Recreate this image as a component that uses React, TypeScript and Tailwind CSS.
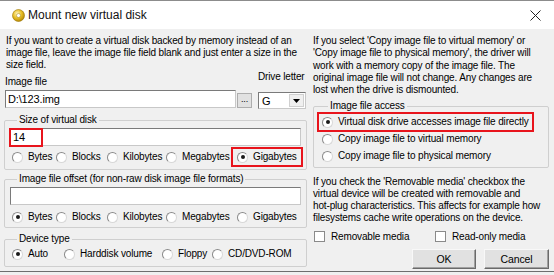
import React from "react";

const font = { fontFamily: '"Liberation Sans", Arial, sans-serif' };

function Radio({ label, checked, w, children }: { label: string; checked?: boolean; w?: string; children?: React.ReactNode }) {
  return (
    <div className={`relative flex items-center h-[12px] shrink-0 ${w ?? ""}`}>
      {children}
      <span className="relative flex items-center justify-center w-[11px] h-[11px] rounded-full border border-t-[#8a8a8a] border-l-[#8a8a8a] border-r-[#d8d8d8] border-b-[#d8d8d8] bg-white shrink-0">
        {checked && <span className="w-[4px] h-[4px] rounded-full bg-[#1a1a1a]" />}
      </span>
      <span className="ml-[5px] whitespace-nowrap">{label}</span>
    </div>
  );
}

function Check({ label, w }: { label: string; w?: string }) {
  return (
    <div className={`flex items-center h-[13px] shrink-0 ${w ?? ""}`}>
      <span className="w-[11px] h-[11px] border border-[#8a8a8a] bg-white shrink-0" />
      <span className="ml-[6px] whitespace-nowrap">{label}</span>
    </div>
  );
}

function TextBox({ value, children }: { value?: string; children?: React.ReactNode }) {
  return (
    <div className="relative h-[18px] bg-white border border-[#7a7a7a] border-r-[#c8c8c8] border-b-[#c8c8c8] flex items-center pl-[2px] text-[11px]">
      {value}
      {children}
    </div>
  );
}

export default function App() {
  return (
    <div className="w-[554px] h-[275px] bg-[#f0f0f0] text-[10px] tracking-[-0.15px] text-black leading-[12px] overflow-hidden" style={font}>
      <div className="h-[272px] flex flex-col border-t border-[#8c8c8c] border-b border-b-[#6e6e6e]">
        {/* title bar */}
        <div className="h-[28px] bg-white flex items-center shrink-0">
          <svg className="ml-[12px]" width="13" height="13" viewBox="0 0 13 13">
            <defs>
              <radialGradient id="cd" cx="0.4" cy="0.35" r="0.7">
                <stop offset="0" stopColor="#fff6c0" />
                <stop offset="0.5" stopColor="#e8c02a" />
                <stop offset="1" stopColor="#b08300" />
              </radialGradient>
            </defs>
            <circle cx="6.5" cy="6.5" r="6" fill="url(#cd)" stroke="#9a7400" strokeWidth="0.6" />
            <circle cx="6.5" cy="6.5" r="2" fill="#ffffff" stroke="#a08010" strokeWidth="0.5" />
          </svg>
          <span className="ml-[3px] text-[12px] tracking-normal leading-none text-[#111]">
            Mount new virtual disk
          </span>
          <svg className="ml-auto mr-[13px]" width="11" height="11" viewBox="0 0 11 11">
            <path d="M0.5 0.5 L10.5 10.5 M10.5 0.5 L0.5 10.5" stroke="#222" strokeWidth="1" />
          </svg>
        </div>

        <div className="flex flex-1 min-h-0">
          {/* left column */}
          <div className="w-[307px] pl-[4px] shrink-0 flex flex-col">
            <p className="pt-[6px] pl-[2px] leading-[12px] whitespace-nowrap">
              If you want to create a virtual disk backed by memory instead of an<br />
              image file, leave the image file field blank and just enter a size in the<br />
              size field.
            </p>
            <div className="flex">
              <div className="flex flex-col w-[248px] pl-[1px]">
                <span className="mt-[5px] h-[12px]">Image file</span>
                <div className="flex items-end mt-[2px]">
                  <div className="w-[233px]">
                    <TextBox value="D:\123.img" />
                  </div>
                  <div className="w-[15px] h-[15px] ml-[1px] bg-[#e1e1e1] border border-[#adadad] flex items-center justify-center text-[9px] leading-none pb-[3px]">...</div>
                </div>
              </div>
              <div className="flex flex-col ml-[6px] w-[48px]">
                <span className="h-[12px] whitespace-nowrap">Drive letter</span>
                <div className="mt-[9px] h-[17px] bg-white border border-[#7a7a7a] border-r-[#c8c8c8] border-b-[#c8c8c8] flex items-center">
                  <span className="pl-[3px] text-[11px] flex-1">G</span>
                  <div className="w-[15px] h-[13px] mr-[1px] bg-[#f0f0f0] border border-[#d0d0d0] flex items-center justify-center">
                    <svg width="7" height="4" viewBox="0 0 7 4"><path d="M0 0 H7 L3.5 4 Z" fill="#000" /></svg>
                  </div>
                </div>
              </div>
            </div>

            <fieldset className="mt-[5px] border border-[#cfcfcf] rounded-[2px] px-[5px] pb-[6px]">
              <legend className="ml-[7px] px-[2px] h-[12px] leading-[12px]">Size of virtual disk</legend>
              <div className="mt-[2px] relative">
                <TextBox value="14" />
                <div className="absolute left-[-1px] top-[0px] w-[34px] h-[19px] border-2 border-[#e8141c]" />
              </div>
              <div className="flex mt-[5px] pl-[2px]">
                <Radio label="Bytes" w="w-[44px]" />
                <Radio label="Blocks" w="w-[51px]" />
                <Radio label="Kilobytes" w="w-[59px]" />
                <Radio label="Megabytes" w="w-[71px]" />
                <Radio label="Gigabytes" checked>
                  <div className="absolute left-[-6px] top-[-4px] w-[72px] h-[20px] border-2 border-[#e8141c]" />
                </Radio>
              </div>
            </fieldset>

            <fieldset className="mt-[3px] border border-[#cfcfcf] rounded-[2px] px-[5px] pb-[4px]">
              <legend className="ml-[7px] px-[2px] h-[12px] leading-[12px]">Image file offset (for non-raw disk image file formats)</legend>
              <div className="mt-[2px]">
                <TextBox />
              </div>
              <div className="flex mt-[6px] pl-[2px]">
                <Radio label="Bytes" checked w="w-[44px]" />
                <Radio label="Blocks" w="w-[51px]" />
                <Radio label="Kilobytes" w="w-[59px]" />
                <Radio label="Megabytes" w="w-[71px]" />
                <Radio label="Gigabytes" />
              </div>
            </fieldset>

            <fieldset className="mt-[5px] border border-[#cfcfcf] rounded-[2px] px-[5px] pb-[6px]">
              <legend className="ml-[7px] px-[2px] h-[12px] leading-[12px]">Device type</legend>
              <div className="flex mt-[3px] pl-[2px]">
                <Radio label="Auto" checked w="w-[52px]" />
                <Radio label="Harddisk volume" w="w-[98px]" />
                <Radio label="Floppy" w="w-[50px]" />
                <Radio label="CD/DVD-ROM" />
              </div>
            </fieldset>
          </div>

          {/* right column */}
          <div className="flex flex-col pl-[6px] w-[242px] shrink-0">
            <p className="pt-[6px] leading-[12.25px] whitespace-nowrap">
              If you select 'Copy image file to virtual memory' or<br />
              'Copy image file to physical memory', the driver will<br />
              work with a memory copy of the image file. The<br />
              original image file will not change. Any changes are<br />
              lost when the drive is dismounted.
            </p>
            <fieldset className="mt-[4px] border border-[#cfcfcf] rounded-[2px] pl-[8px] pb-[5px]">
              <legend className="ml-[6px] px-[2px] h-[12px] leading-[12px]">Image file access</legend>
              <div className="flex flex-col mt-[4px] gap-[5px]">
                <Radio label="Virtual disk drive accesses image file directly" checked>
                  <div className="absolute left-[-5px] top-[-4px] w-[217px] h-[20px] border-2 border-[#e8141c]" />
                </Radio>
                <Radio label="Copy image file to virtual memory" />
                <Radio label="Copy image file to physical memory" />
              </div>
            </fieldset>
            <p className="mt-[8px] leading-[12px] whitespace-nowrap">
              If you check the 'Removable media' checkbox the<br />
              virtual device will be created with removable and<br />
              hot-plug characteristics. This affects for example how<br />
              filesystems cache write operations on the device.
            </p>
            <div className="flex mt-[6px] pl-[1px]">
              <Check label="Removable media" w="w-[121px]" />
              <Check label="Read-only media" />
            </div>
            <div className="flex justify-end gap-[8px] mt-[6px]">
              <button className="w-[64px] h-[20px] bg-[#e1e1e1] border border-t-[#f8f8f8] border-l-[#f8f8f8] border-r-[#6a6a6a] border-b-[#6a6a6a] shadow-[inset_-1px_-1px_0_#a0a0a0] text-[10.5px]">OK</button>
              <button className="w-[65px] h-[20px] bg-[#e1e1e1] border border-t-[#f8f8f8] border-l-[#f8f8f8] border-r-[#6a6a6a] border-b-[#6a6a6a] shadow-[inset_-1px_-1px_0_#a0a0a0] text-[10.5px]">Cancel</button>
            </div>
          </div>
        </div>
      </div>
    </div>
  );
}
